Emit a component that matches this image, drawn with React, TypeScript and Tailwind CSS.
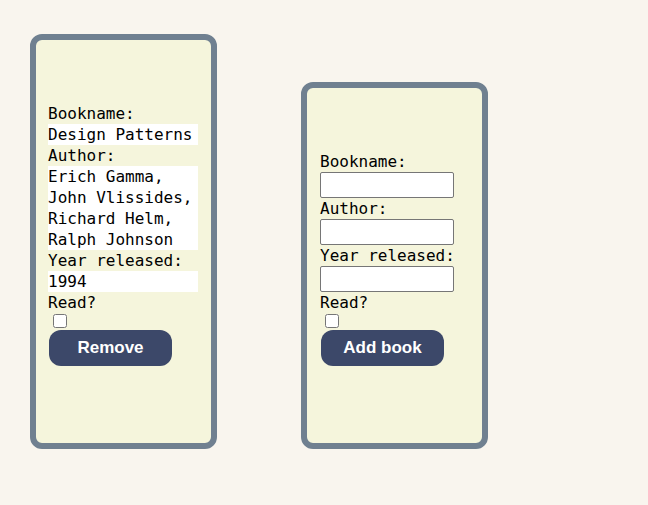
const mono = { fontFamily: '"DejaVu Sans Mono", "Liberation Mono", monospace' };

type Book = { name: string; author: string; year: string };

function BookCard({ book }: { book: Book }) {
    return (
        <div className="w-[187px] border-[6px] border-[#708090] rounded-[12px] bg-[#f5f5dc] pl-[12px] pr-[13px] pt-[63px] pb-[77px] flex flex-col">
            <div className="text-[16px] leading-[21px] text-black font-['DejaVu_Sans_Mono',monospace]">
                <p>Bookname:</p>
                <p className="bg-white">{book.name}</p>
                <p>Author:</p>
                <p className="bg-white">{book.author}</p>
                <p>Year released:</p>
                <p className="bg-white">{book.year}</p>
                <p>Read?</p>
            </div>
            <input type="checkbox" className="block m-0 mt-[1px] ml-[5px] w-[14px] h-[14px]" />
            <button className="mt-[2px] ml-[1px] w-[123px] h-[36px] rounded-[12px] bg-[#3c4869] text-white text-[17px] font-bold font-['Liberation_Sans',Arial,sans-serif]">
                Remove
            </button>
        </div>
    );
}

function NewBookCard() {
    return (
        <div className="w-[187px] border-[6px] border-[#708090] rounded-[12px] bg-[#f5f5dc] pl-[13px] pr-[12px] pt-[63px] pb-[77px] flex flex-col">
            <div className="flex flex-col items-start text-[16px] leading-[21px] text-black font-['DejaVu_Sans_Mono',monospace]">
                <label>Bookname:</label>
                <input type="text" className="w-[134px] h-[26px] bg-white border border-[#767676] rounded-[2px]" />
                <label>Author:</label>
                <input type="text" className="w-[134px] h-[26px] bg-white border border-[#767676] rounded-[2px]" />
                <label>Year released:</label>
                <input type="text" className="w-[134px] h-[26px] bg-white border border-[#767676] rounded-[2px]" />
                <label>Read?</label>
            </div>
            <input type="checkbox" className="block m-0 mt-[1px] ml-[5px] w-[14px] h-[14px]" />
            <button className="mt-[2px] ml-[1px] w-[123px] h-[36px] rounded-[12px] bg-[#3c4869] text-white text-[17px] font-bold font-['Liberation_Sans',Arial,sans-serif]">
                Add book
            </button>
        </div>
    );
}

export default function App() {
    const book: Book = {
        name: "Design Patterns",
        author: "Erich Gamma, John Vlissides, Richard Helm, Ralph Johnson",
        year: "1994",
    };

    return (
        <div className="w-[648px] h-[505px] bg-[#f9f5ee] pl-[30px] pt-[34px] flex items-start" style={mono}>
            <div className="flex items-end gap-[84px]">
                <BookCard book={book} />
                <NewBookCard />
            </div>
        </div>
    );
}
